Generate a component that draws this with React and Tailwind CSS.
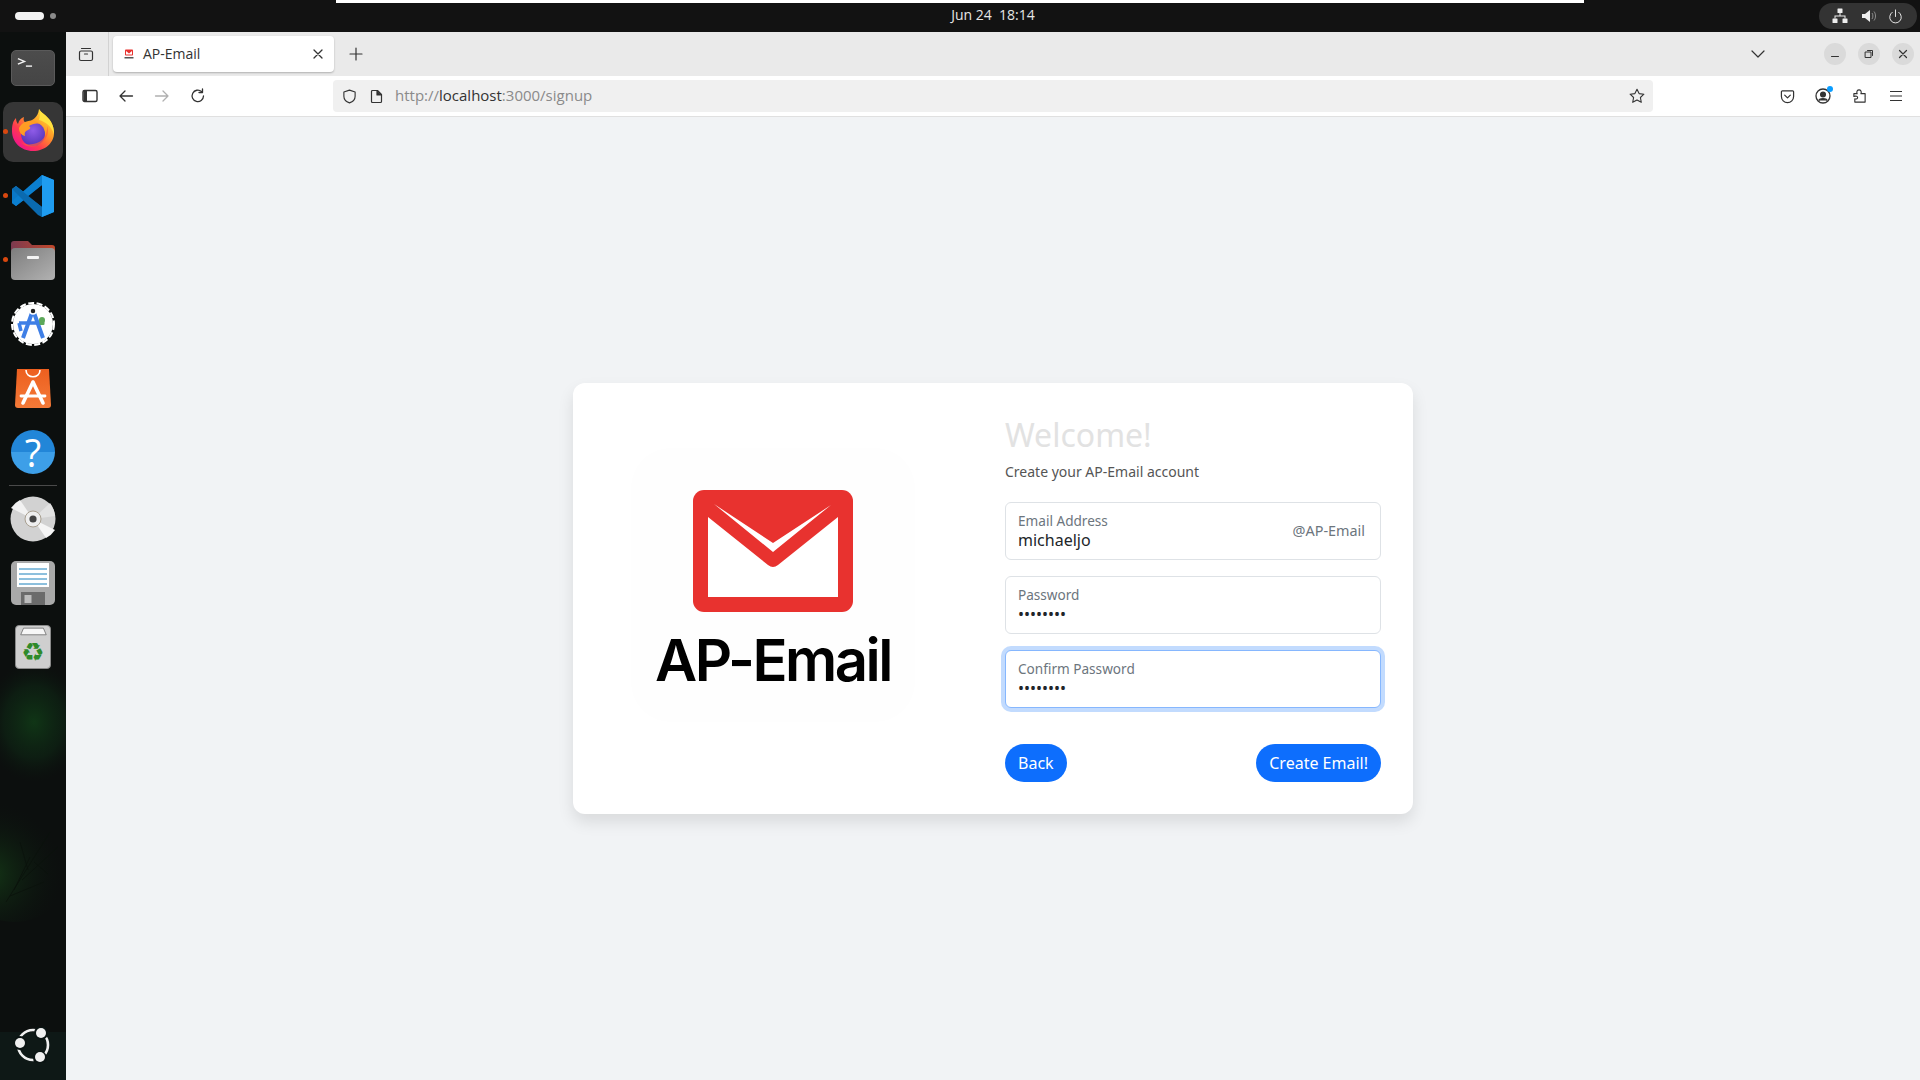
import React from "react";

const chromeFont = "font-['Open_Sans','Noto_Sans',sans-serif]";

const Stroke = ({ className, children, viewBox = "0 0 16 16", sw = 1.3 }) => (
  <svg viewBox={viewBox} className={className} fill="none" stroke="currentColor" strokeWidth={sw} strokeLinecap="round" strokeLinejoin="round">
    {children}
  </svg>
);

const Wallpaper = () => (
  <svg className="absolute inset-0 h-full w-full" viewBox="0 0 66 1048" preserveAspectRatio="none">
    <defs>
      <radialGradient id="glow1" cx="0.5" cy="0.5" r="0.5">
        <stop offset="0" stopColor="#124a1a" stopOpacity="0.65" />
        <stop offset="0.6" stopColor="#0f3318" stopOpacity="0.4" />
        <stop offset="1" stopColor="#0b1a10" stopOpacity="0" />
      </radialGradient>
      <radialGradient id="glow2" cx="0.3" cy="0.6" r="0.6">
        <stop offset="0" stopColor="#1a551c" stopOpacity="0.55" />
        <stop offset="1" stopColor="#0b1a10" stopOpacity="0" />
      </radialGradient>
    </defs>
    <ellipse cx="34" cy="690" rx="50" ry="60" fill="url(#glow1)" />
    <ellipse cx="14" cy="830" rx="60" ry="60" fill="url(#glow2)" />
    <g stroke="#0a120b" strokeWidth="1" fill="none" opacity="0.8">
      <path d="M6 870 L50 800 M22 848 L58 815 M14 858 L30 825 M34 830 L48 842 M10 864 L44 850 M28 838 L20 810" />
    </g>
    <rect x="0" y="1000" width="66" height="48" fill="#101c1a" opacity="0.7" />
  </svg>
);

const Terminal = () => (
  <div className="flex h-[36px] w-[44px] rounded-[5px] bg-[linear-gradient(#4c4c4c,#454545)] border border-[#5a5a5a]">
    <svg viewBox="0 0 44 36" className="h-full w-full" fill="none" stroke="#f2f2f2" strokeWidth="1.5">
      <path d="M6 8 L13 11 L6 14" />
      <path d="M14.500 16 H21" />
    </svg>
  </div>
);

const FirefoxIcon = () => (
  <svg viewBox="0 0 42 42" className="-mt-[4px] h-[42px] w-[42px]">
    <defs>
      <linearGradient id="ffBody" x1="0.85" y1="0.1" x2="0.15" y2="0.9">
        <stop offset="0" stopColor="#ffdc3a" />
        <stop offset="0.35" stopColor="#ff9a26" />
        <stop offset="0.7" stopColor="#ff3a4f" />
        <stop offset="1" stopColor="#f0148c" />
      </linearGradient>
      <radialGradient id="ffGlobe" cx="0.5" cy="0.35" r="0.75">
        <stop offset="0" stopColor="#8f5ce8" />
        <stop offset="1" stopColor="#4a2fb0" />
      </radialGradient>
    </defs>
    <path d="M27 0 C29 4 33 5 36 9 C41 14 42 20 42 24 C42 34 33 42 21 42 C9 42 0 33 0 22 C0 16 1 12 4 9 C4 12 5 14 6 15 C7 11 9 9 12 8 C11 11 12 13 14 14 C19 11 26 10 27 0 Z" fill="url(#ffBody)" />
    <path d="M27 0 C29 4 33 5 36 9 C40 13 42 19 42 25 C39 17 34 13 27 11 C28 7 28 4 27 0 Z" fill="#ffe23f" />
    <circle cx="21" cy="25" r="12" fill="url(#ffGlobe)" />
    <path d="M7 19 C10 13 16 11 22 12 C26 13 28 15 28 15 C24 14 20 15 17 17 C18 18 20 19 16 21 C13 22 12 24 13 27 C9 26 7 23 7 19 Z" fill="#ff9c24" />
    <path d="M9 33 C14 39 25 39 31 33 C36 28 37 22 35 17 C36 26 30 34 21 35 C16 36 12 35 9 33 Z" fill="#ff5a3c" opacity="0.7" />
  </svg>
);

const VSCodeIcon = () => (
  <svg viewBox="0 0 42 42" className="h-[42px] w-[42px]">
    <path d="M30 0 L42 5 V37 L30 42 L12 25 L4 31 L0 28 V14 L4 11 L12 17 Z" fill="#0a78c8" />
    <path d="M30 0 L42 5 V37 L30 42 Z" fill="#1f9cf0" />
    <path d="M30 10 L15 21 L30 32 Z" fill="#0d0f10" />
    <path d="M0 28 L4 31 L30 10 V0 L0 26 Z" fill="#0b7fd0" />
    <path d="M0 14 L4 11 L30 32 V42 L26 40 Z" fill="#0a6ab0" />
  </svg>
);

const FilesIcon = () => (
  <svg viewBox="0 0 44 40" className="h-[40px] w-[44px]">
    <defs>
      <linearGradient id="folderBack" x1="0" y1="0" x2="1" y2="0">
        <stop offset="0" stopColor="#7c3a50" />
        <stop offset="1" stopColor="#c2482a" />
      </linearGradient>
      <linearGradient id="folderFront" x1="0" y1="0" x2="1" y2="1">
        <stop offset="0" stopColor="#7d7d7d" />
        <stop offset="1" stopColor="#b2b2b2" />
      </linearGradient>
    </defs>
    <path d="M0 4 a3 3 0 0 1 3 -3 H17 L21 5 H41 a3 3 0 0 1 3 3 V14 H0 Z" fill="url(#folderBack)" />
    <rect x="0" y="8" width="44" height="32" rx="4" fill="url(#folderFront)" />
    <rect x="16" y="16" width="12" height="3" rx="1" fill="#f4f4f4" />
  </svg>
);

const AndroidStudioIcon = () => (
  <svg viewBox="0 0 44 46" className="h-[46px] w-[44px]">
    <circle cx="22" cy="23" r="20" fill="#fff" />
    <circle cx="22" cy="23" r="21" fill="none" stroke="#fff" strokeWidth="2" strokeDasharray="6 2.500" />
    <path d="M22 9 L12 37 M22 9 L32 37" stroke="#3f7fe6" strokeWidth="4" fill="none" />
    <path d="M8 22 H31" stroke="#3f7fe6" strokeWidth="3.500" />
    <path d="M8 22 L10 30" stroke="#3f7fe6" strokeWidth="3.500" />
    <circle cx="22" cy="10" r="3" fill="#222" stroke="#fff" strokeWidth="1.500" />
    <circle cx="31" cy="19" r="3" fill="#5da85a" />
    <rect x="28.500" y="19" width="5" height="5" rx="1" fill="#5da85a" />
  </svg>
);

const AppCenterIcon = () => (
  <svg viewBox="0 0 36 39" className="h-[39px] w-[36px]">
    <defs>
      <linearGradient id="bag" x1="0" y1="0" x2="0" y2="1">
        <stop offset="0" stopColor="#ed5f1f" />
        <stop offset="1" stopColor="#f47a38" />
      </linearGradient>
    </defs>
    <path d="M2 0 H34 L36 36 a3 3 0 0 1 -3 3 H3 a3 3 0 0 1 -3 -3 Z" fill="url(#bag)" />
    <path d="M11 1 C11 10 25 10 25 1" fill="none" stroke="#fff" strokeWidth="1.600" />
    <path d="M18 13 L8 34 M18 13 L28 34" stroke="#fff" strokeWidth="3.600" strokeLinecap="round" />
    <path d="M6 27 H30" stroke="#fff" strokeWidth="2.800" strokeLinecap="round" />
  </svg>
);

const HelpIcon = () => (
  <div className="flex h-[44px] w-[44px] items-center justify-center rounded-full bg-[linear-gradient(#2286d8_50%,#3d9fe8_50%)] font-['Open_Sans',sans-serif] text-[38px] font-normal leading-none text-white">
    ?
  </div>
);

const DiscIcon = () => (
  <svg viewBox="0 0 46 46" className="h-[46px] w-[46px]">
    <circle cx="23" cy="23" r="22.500" fill="#d2d2d2" />
    <path d="M23 23 L1 12 A23 23 0 0 1 10 4 Z" fill="#f2f2f2" />
    <path d="M23 23 L45 34 A23 23 0 0 1 36 42 Z" fill="#f5f5f5" />
    <path d="M23 23 L40 7 A23 23 0 0 1 45 20 Z" fill="#e2e2e2" />
    <circle cx="23" cy="23" r="8" fill="#eee" stroke="#a89f90" strokeWidth="1" />
    <circle cx="23" cy="23" r="3.600" fill="#444" />
  </svg>
);

const FloppyIcon = () => (
  <svg viewBox="0 0 44 44" className="h-[44px] w-[44px]">
    <rect width="44" height="44" rx="5" fill="#a9a9a9" />
    <rect x="6" y="2" width="32" height="24" fill="#fff" />
    <path d="M8 8 H36 M8 13 H36 M8 18 H36 M8 23 H36" stroke="#1b80bb" strokeWidth="1" />
    <rect x="10" y="31" width="24" height="13" fill="#6b6b6b" />
    <rect x="13.500" y="34" width="7" height="8" fill="#bdbdbd" />
  </svg>
);

const TrashIcon = () => (
  <div className="relative flex h-[44px] w-[36px] justify-center rounded-[4px] border border-[#8a8a8a] bg-[#cfcfcf] pt-[10px] font-['DejaVu_Sans',sans-serif] text-[26px] leading-[32px] text-[#2f8a2a]">
    <svg viewBox="0 0 36 10" className="absolute left-0 top-0 h-[10px] w-full">
      <path d="M5 9 L8 2 H29 L32 9 Z" fill="#f7f7f7" stroke="#666" strokeWidth="0.800" />
    </svg>
    ♻
  </div>
);

const UbuntuLogo = () => (
  <svg viewBox="0 0 36 36" className="h-[36px] w-[36px]" fill="none">
    <circle cx="18" cy="18" r="15" stroke="#f0f0f0" strokeWidth="2.600" />
    <circle cx="26" cy="6" r="7" fill="#0b1413" />
    <circle cx="5" cy="16" r="7" fill="#0b1413" />
    <circle cx="25" cy="31" r="7" fill="#0b1413" />
    <circle cx="26" cy="6" r="5" fill="#f0f0f0" />
    <circle cx="5" cy="16" r="5" fill="#f0f0f0" />
    <circle cx="25" cy="30" r="5" fill="#f0f0f0" />
  </svg>
);

const DockSlot = ({ dot, active, children }) => (
  <div className="relative flex h-[64px] w-full items-center justify-center">
    {active && <div className="absolute left-[3px] top-[2px] h-[60px] w-[60px] rounded-[10px] bg-[#363636]" />}
    {dot && <div className="absolute left-[3px] top-[29px] h-[5px] w-[5px] rounded-full bg-[#d9480f]" />}
    <div className="relative flex">{children}</div>
  </div>
);

const Dock = () => (
  <div className="relative flex w-[66px] shrink-0 flex-col items-center overflow-hidden bg-[#0c0f0e] pt-[4px]">
    <Wallpaper />
    <DockSlot><Terminal /></DockSlot>
    <DockSlot dot active><FirefoxIcon /></DockSlot>
    <DockSlot dot><VSCodeIcon /></DockSlot>
    <DockSlot dot><FilesIcon /></DockSlot>
    <DockSlot><AndroidStudioIcon /></DockSlot>
    <DockSlot><AppCenterIcon /></DockSlot>
    <DockSlot><HelpIcon /></DockSlot>
    <div className="relative my-[1px] h-px w-[48px] shrink-0 bg-[#4a4a4a]" />
    <DockSlot><DiscIcon /></DockSlot>
    <DockSlot><FloppyIcon /></DockSlot>
    <DockSlot><TrashIcon /></DockSlot>
    <div className="relative mt-auto mb-[17px]"><UbuntuLogo /></div>
  </div>
);

const TopBar = () => (
  <div className="relative flex h-[32px] shrink-0 items-center justify-between bg-[#121212] pl-[15px] pr-[3px]">
    <div className="absolute left-[336px] top-0 h-[3px] w-[1248px] bg-white" />
    <div className="flex items-center gap-[6px]">
      <div className="h-[8px] w-[29px] rounded-full bg-[#f2f2f2]" />
      <div className="h-[6px] w-[6px] rounded-full bg-[#8a8a8a]" />
    </div>
    <div className={`absolute left-[66px] right-0 top-[5px] text-center text-[14px] leading-[20px] text-[#e6e6e6] ${chromeFont}`}>Jun 24&nbsp; 18:14</div>
    <div className="flex h-[26px] w-[98px] items-center rounded-full bg-[#333] pl-[13px] text-[#eee]">
      <svg viewBox="0 0 16 16" className="h-[16px] w-[16px]" fill="currentColor">
        <rect x="5.500" y="0.500" width="5" height="4.500" rx="0.500" />
        <rect x="0.500" y="10.500" width="5" height="4.500" rx="0.500" />
        <rect x="10.500" y="10.500" width="5" height="4.500" rx="0.500" />
        <path d="M7.500 5h1v2.500H13.500V10.500h-1V8.500h-9v2h-1V7.500h5z" />
      </svg>
      <svg viewBox="0 0 16 16" className="ml-[13px] h-[16px] w-[16px]" fill="currentColor">
        <path d="M1 6h3l5-4v12l-5-4H1z" />
        <path d="M11 5c1.200 1.500 1.200 4.500 0 6M13 3.500c2 2.500 2 6.500 0 9" fill="none" stroke="currentColor" strokeWidth="0.800" opacity="0.6" />
      </svg>
      <Stroke className="ml-[11px] h-[15px] w-[15px]" sw={1}>
        <path d="M8 1v7" />
        <path d="M4.500 3.500a6.200 6.200 0 1 0 7 0" />
      </Stroke>
    </div>
  </div>
);

const WinButton = ({ children }) => (
  <div className="flex h-[22px] w-[22px] items-center justify-center rounded-full bg-[#dadada] text-[#333]">{children}</div>
);

const TabStrip = () => (
  <div className="flex h-[44px] shrink-0 items-center bg-[#eaeaea] text-[#333]">
    <div className="flex h-full w-[43px] items-center justify-center border-r border-[#d2d2d2] pr-[2px]">
      <Stroke className="h-[16px] w-[16px]" sw={1.2}>
        <rect x="1.500" y="5" width="13" height="9.500" rx="1.500" />
        <path d="M3.500 2.500h9M6.500 8h3" />
      </Stroke>
    </div>
    <div className="ml-[4px] flex h-[36px] w-[221px] items-center rounded-[4px] bg-white pl-[11px] pr-[11px] shadow-[0_1px_2px_rgba(0,0,0,0.25)]">
      <svg viewBox="0 0 10 10" className="h-[10px] w-[10px]">
        <rect x="1" y="0.500" width="8" height="6" rx="0.800" fill="#e8322f" />
        <path d="M2 2 L5 4.400 L8 2 V5.500 H2 Z" fill="#fff" />
        <rect x="0.500" y="8" width="9" height="1.500" fill="#555" />
      </svg>
      <span className={`ml-[9px] -mt-[2px] flex-1 text-[14px] text-[#333] ${chromeFont}`}>AP-Email</span>
      <Stroke className="h-[10px] w-[10px]" viewBox="0 0 10 10" sw={1.3}>
        <path d="M1 1l8 8M9 1l-8 8" />
      </Stroke>
    </div>
    <Stroke className="ml-[15px] h-[14px] w-[14px]" viewBox="0 0 14 14" sw={1.2}>
      <path d="M7 1v12M1 7h12" />
    </Stroke>
    <div className="flex-1" />
    <Stroke className="mr-[59px] h-[8px] w-[14px]" viewBox="0 0 14 8" sw={1.2}>
      <path d="M1 1l6 6 6-6" />
    </Stroke>
    <div className="mr-[6px] flex items-center gap-[12px]">
      <WinButton>
        <Stroke className="h-[10px] w-[10px]" viewBox="0 0 10 10" sw={1}><path d="M1.500 7.500h7" /></Stroke>
      </WinButton>
      <WinButton>
        <Stroke className="h-[10px] w-[10px]" viewBox="0 0 10 10" sw={1}>
          <rect x="1.500" y="3" width="5.500" height="5.500" />
          <path d="M3.500 1.500h5v5" />
        </Stroke>
      </WinButton>
      <WinButton>
        <Stroke className="h-[10px] w-[10px]" viewBox="0 0 10 10" sw={1.2}><path d="M1.500 1.500l7 7M8.500 1.500l-7 7" /></Stroke>
      </WinButton>
    </div>
  </div>
);

const NavBar = () => (
  <div className="flex h-[41px] shrink-0 items-center border-b border-[#e0e0e0] bg-white text-[#333]">
    <Stroke className="ml-[16px] h-[16px] w-[16px]" sw={1.4}>
      <rect x="1" y="2.500" width="14" height="11" rx="1.500" />
      <rect x="1.500" y="3" width="3.500" height="10" fill="currentColor" stroke="none" />
    </Stroke>
    <Stroke className="ml-[20px] h-[16px] w-[16px]">
      <path d="M14.500 8H2M7 3L2 8l5 5" />
    </Stroke>
    <Stroke className="ml-[20px] h-[16px] w-[16px] text-[#b0b0b0]">
      <path d="M1.500 8H14M9 3l5 5-5 5" />
    </Stroke>
    <Stroke className="ml-[20px] h-[16px] w-[16px]">
      <path d="M13.500 8A5.700 5.700 0 1 1 11.500 3.500" />
      <path d="M12.500 1v3.500H9" />
    </Stroke>
    <div className="ml-[127px] flex h-[32px] w-[1320px] items-center rounded-[4px] bg-[#f0f0f0] pl-[9px] pr-[8px]">
      <Stroke className="h-[15px] w-[15px]" sw={1.2}>
        <path d="M8 1.200l6 2v4.500c0 3.500-2.500 6-6 7.100-3.500-1.100-6-3.600-6-7.100V3.200z" />
      </Stroke>
      <Stroke className="ml-[13px] h-[15px] w-[13px]" viewBox="0 0 13 15" sw={1.2}>
        <path d="M1.500 2.500a1 1 0 0 1 1-1h5l4 4v7a1 1 0 0 1-1 1h-8a1 1 0 0 1-1-1z" />
        <path d="M7 1.500v4.500h4.500" fill="currentColor" />
      </Stroke>
      <span className={`ml-[12px] -mt-[2px] flex-1 text-[15px] text-[#8a8a8a] ${chromeFont}`}>
        http://<span className="text-[#333]">localhost</span>:3000/signup
      </span>
      <Stroke className="h-[16px] w-[16px]" sw={1.1}>
        <path d="M8 1.200l2.100 4.400 4.800.6-3.500 3.300.9 4.800L8 11.900l-4.300 2.400.9-4.800L1.100 6.200l4.800-.6z" />
      </Stroke>
    </div>
    <div className="flex-1" />
    <Stroke className="mr-[20px] h-[15px] w-[15px]" sw={1.3}>
      <path d="M1.500 3a1 1 0 0 1 1-1h11a1 1 0 0 1 1 1v5a6.500 6.500 0 0 1-13 0z" />
      <path d="M5 6.500l3 3 3-3" />
    </Stroke>
    <div className="relative mr-[21px]">
      <svg viewBox="0 0 16 16" className="h-[16px] w-[16px]" fill="none" stroke="currentColor" strokeWidth="1.300">
        <circle cx="8" cy="8" r="7" />
        <circle cx="8" cy="6.500" r="2.400" fill="currentColor" />
        <path d="M3.800 12.500c1-2.500 7.400-2.500 8.400 0" fill="currentColor" />
      </svg>
      <div className="absolute -right-[2px] -top-[2px] h-[6px] w-[6px] rounded-full bg-[#0a9dff]" />
    </div>
    <Stroke className="mr-[23px] h-[16px] w-[15px]" sw={1.2}>
      <path d="M2 5.500h3.500c-1-2 .2-4 2-4s3 2 2 4H14v9H3v-3.500c2 .8 3-.5 3-1.500S4.500 7.700 2 8.500z" />
    </Stroke>
    <Stroke className="mr-[18px] h-[12px] w-[12px]" viewBox="0 0 12 12" sw={1.1}>
      <path d="M0 1.500h12M0 6h12M0 10.500h12" />
    </Stroke>
  </div>
);

const Logo = () => (
  <div className="flex h-[336px] w-full items-start justify-center pt-[18px]">
    <div className="flex h-[274px] w-[284px] flex-col items-center rounded-[40px] bg-[#fefefe] pt-[42px]">
      <svg viewBox="0 0 160 122" className="h-[122px] w-[160px]">
        <rect width="160" height="122" rx="11" fill="#e8322f" />
        <path d="M15 27 L75 75 Q80 79 85 75 L145 27 V107 H15 Z" fill="#fff" />
        <path d="M21 14 L80 53 L138 15 L80 62 Z" fill="#fff" />
      </svg>
      <div className="mt-[13px] font-['Inter',sans-serif] text-[58px] font-semibold leading-[70px] tracking-[-2.5px] text-black">AP-Email</div>
    </div>
  </div>
);

const FloatingField = ({ label, value, suffix, focused }) => (
  <div className={`relative h-[58px] rounded-[6px] border bg-white ${focused ? "border-[#86b7fe] shadow-[0_0_0_4px_rgba(13,110,253,0.25)]" : "border-[#dee2e6]"}`}>
    <label className="absolute left-[12px] top-[8px] text-[13.6px] leading-[20px] text-[#6c757d]">{label}</label>
    <input
      readOnly
      type="text"
      value={value}
      className="absolute bottom-[7px] left-[12px] w-[300px] bg-transparent text-[16px] leading-[24px] text-[#212529] outline-none"
    />
    {suffix && <span className="absolute right-[15px] top-[18px] text-[14.4px] leading-[20px] text-[#6c757d]">{suffix}</span>}
  </div>
);

const SignupCard = () => (
  <div className="grid w-[840px] grid-cols-[336px_376px] items-center gap-[64px] rounded-[12px] bg-white p-[32px] shadow-[0_8px_16px_rgba(0,0,0,0.1)] font-['Noto_Sans',sans-serif]">
    <Logo />
    <div>
      <h1 className="text-[32px] font-normal leading-[40px] text-[#e2e2e2]">Welcome!</h1>
      <p className="mt-[6.4px] text-[14px] leading-[21px] text-[#555]">Create your AP-Email account</p>
      <div className="mt-[20px] flex flex-col gap-[16px]">
        <FloatingField label="Email Address" value="michaeljo" suffix="@AP-Email" />
        <FloatingField label="Password" value="••••••••" />
        <FloatingField label="Confirm Password" value="••••••••" focused />
      </div>
      <div className="mt-[36px] flex justify-between">
        <button className="h-[38px] rounded-full bg-[#0d6efd] px-[13px] text-[16px] text-white">Back</button>
        <button className="h-[38px] rounded-full bg-[#0d6efd] px-[13px] text-[16px] text-white">Create Email!</button>
      </div>
    </div>
  </div>
);

const App = () => {
  return (
    <div className="flex h-screen w-full flex-col overflow-hidden bg-[#121212]">
      <TopBar />
      <div className="flex min-h-0 flex-1">
        <Dock />
        <div className="flex min-w-0 flex-1 flex-col">
          <TabStrip />
          <NavBar />
          <div className="flex flex-1 items-center justify-center bg-[#f1f3f5]">
            <SignupCard />
          </div>
        </div>
      </div>
    </div>
  );
};

export default App;
